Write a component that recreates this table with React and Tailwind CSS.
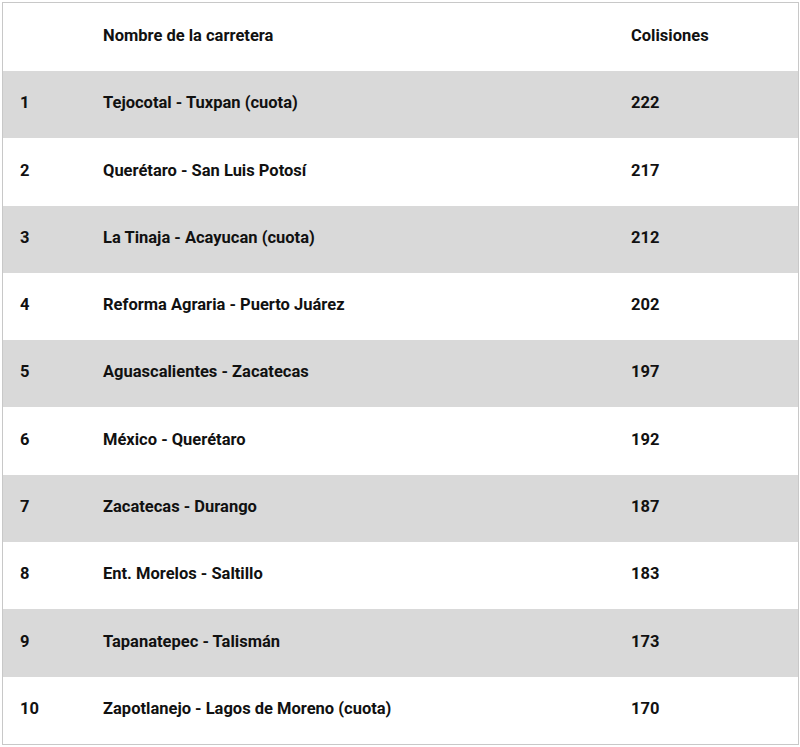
import React from 'react';

const rows = [
  ['1', 'Tejocotal - Tuxpan (cuota)', '222'],
  ['2', 'Querétaro - San Luis Potosí', '217'],
  ['3', 'La Tinaja - Acayucan (cuota)', '212'],
  ['4', 'Reforma Agraria - Puerto Juárez', '202'],
  ['5', 'Aguascalientes - Zacatecas', '197'],
  ['6', 'México - Querétaro', '192'],
  ['7', 'Zacatecas - Durango', '187'],
  ['8', 'Ent. Morelos - Saltillo', '183'],
  ['9', 'Tapanatepec - Talismán', '173'],
  ['10', 'Zapotlanejo - Lagos de Moreno (cuota)', '170'],
];

export default function App() {
  return (
    <main className="w-[800px] h-[747px] bg-white pt-[2px] pl-[2px]" style={{ fontFamily: 'Roboto, "Liberation Sans", sans-serif' }}>
      <div className="w-[797px] border border-[#c8c8c8] text-[16.5px] font-bold text-[#111]">
        <div className="flex items-center h-[68px] pb-[2px] bg-white">
          <div className="w-[100px] pl-[17px]"></div>
          <div className="flex-1">Nombre de la carretera</div>
          <div className="w-[167px]">Colisiones</div>
        </div>
        {rows.map(([n, name, c], i) => (
          <div
            key={n}
            className={`flex items-center h-[67.3px] pb-[2px] ${i % 2 === 0 ? 'bg-[#d9d9d9]' : 'bg-white'}`}
          >
            <div className="w-[100px] pl-[17px]">{n}</div>
            <div className="flex-1">{name}</div>
            <div className="w-[167px]">{c}</div>
          </div>
        ))}
      </div>
    </main>
  );
}
